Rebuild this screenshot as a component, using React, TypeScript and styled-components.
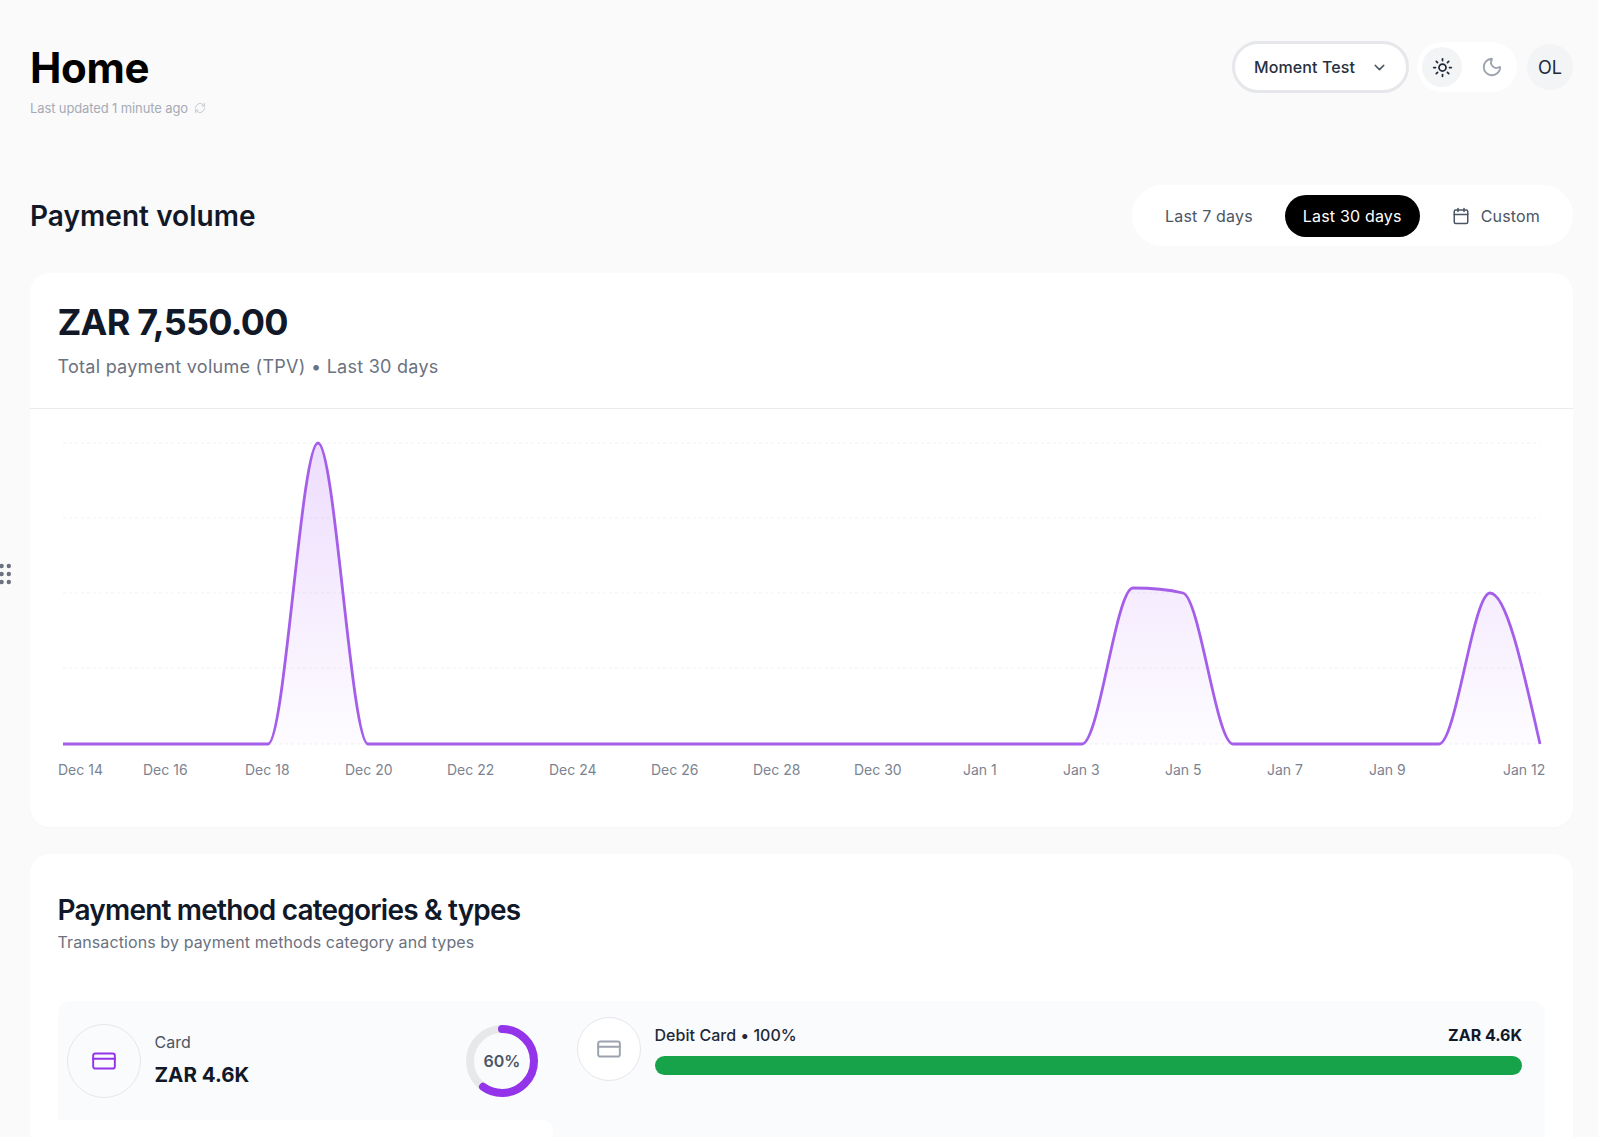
import React from "react";
import styled, { createGlobalStyle } from "styled-components";
import { Calendar, ChevronDown, CreditCard, Moon, RefreshCw, Sun } from "lucide-react";

const Global = createGlobalStyle`
  html, body { margin: 0; padding: 0; height: 100%; overflow: hidden; background: #fafafb; }
  * { box-sizing: border-box; }
  body { font-family: Inter, "Liberation Sans", sans-serif; color: #111827; }
`;

const Page = styled.div`
  height: 1137px;
  overflow: hidden;
  padding: 40px 25px 0 30px;
`;
const TopBar = styled.header`
  display: flex;
  justify-content: space-between;
  align-items: flex-start;
  height: 145px;
`;
const TitleBlock = styled.div`
  padding-top: 3px;
`;
const Title = styled.h1`
  margin: 0;
  font-size: 42px;
  line-height: 50px;
  font-weight: 700;
  letter-spacing: -0.3px;
  color: #000;
`;
const Updated = styled.div`
  display: flex;
  align-items: center;
  gap: 6px;
  margin-top: 7px;
  font-size: 13px;
  line-height: 16px;
  letter-spacing: -0.12px;
  color: #a5abb5;
  svg { color: #c4c8cf; }
`;
const Controls = styled.div`
  display: flex;
  align-items: center;
  padding-top: 1px;
`;
const OrgSelect = styled.button`
  display: flex;
  align-items: center;
  justify-content: space-between;
  width: 177px;
  height: 52px;
  padding: 0 18px 0 19px;
  border: 3px solid #e5e7eb;
  border-radius: 26px;
  background: #fff;
  font: 500 16px Inter, sans-serif;
  letter-spacing: 0.1px;
  color: #27303f;
  svg { color: #4b5563; }
`;
const ThemeToggle = styled.div`
  display: flex;
  align-items: center;
  width: 100px;
  height: 50px;
  margin-left: 8px;
  padding-left: 5px;
  border-radius: 25px;
  background: #fff;
`;
const ThemeButton = styled.span<{ $active?: boolean }>`
  display: flex;
  flex: none;
  align-items: center;
  justify-content: center;
  width: 40px;
  height: 40px;
  margin-right: 10px;
  border-radius: 50%;
  background: ${(p) => (p.$active ? "#f3f4f6" : "transparent")};
  color: ${(p) => (p.$active ? "#1f2937" : "#9ca3af")};
`;
const Avatar = styled.div`
  display: flex;
  align-items: center;
  justify-content: center;
  width: 46px;
  height: 46px;
  margin-left: 10px;
  border-radius: 50%;
  background: #f3f4f6;
  font-size: 18px;
  color: #1f2937;
`;
const SectionRow = styled.div`
  display: flex;
  justify-content: space-between;
  align-items: center;
  height: 61px;
  margin-bottom: 27px;
`;
const SectionTitle = styled.h2`
  margin: 0;
  font-size: 28px;
  line-height: 34px;
  font-weight: 600;
  letter-spacing: 0.05px;
  color: #111827;
`;
const RangeTabs = styled.div`
  display: flex;
  align-items: center;
  gap: 14px;
  height: 61px;
  padding: 0 15px;
  border-radius: 31px;
  background: #fff;
`;
const RangeTab = styled.span<{ $active?: boolean }>`
  display: flex;
  align-items: center;
  gap: 11px;
  height: 42px;
  padding: 0 18px;
  border-radius: 21px;
  font-size: 16px;
  font-weight: 400;
  letter-spacing: 0.18px;
  background: ${(p) => (p.$active ? "#000" : "transparent")};
  color: ${(p) => (p.$active ? "#fff" : "#4b5563")};
`;
const Card = styled.section`
  border-radius: 20px;
  background: #fff;
  box-shadow: 0 1px 2px rgba(17, 24, 39, 0.02);
`;
const VolumeCard = styled(Card)`
  height: 554px;
  margin-bottom: 27px;
`;
const VolumeHead = styled.div`
  height: 136px;
  padding: 27px 28px 0 27.5px;
  border-bottom: 1px solid #e9ebee;
`;
const Amount = styled.div`
  font-size: 36px;
  line-height: 44px;
  font-weight: 700;
  letter-spacing: -0.82px;
  color: #111827;
`;
const AmountNote = styled.div`
  margin-top: 11px;
  font-size: 18px;
  line-height: 24px;
  letter-spacing: 0.27px;
  color: #6b7280;
`;
const ChartSvg = styled.svg`
  display: block;
  width: 1543px;
  height: 417px;
`;
const MethodsCard = styled(Card)`
  padding: 39px 28px 0 27.5px;
`;
const MethodsTitle = styled.h3`
  margin: 0;
  font-size: 28px;
  line-height: 34px;
  font-weight: 600;
  letter-spacing: -0.8px;
  color: #111827;
`;
const MethodsNote = styled.p`
  margin: 4px 0 0;
  font-size: 16px;
  line-height: 22px;
  letter-spacing: 0.1px;
  color: #6b7280;
`;
const Panel = styled.div`
  display: grid;
  grid-template-columns: 495px 1fr;
  height: 200px;
  margin-top: 48px;
  border-radius: 12px;
  background: #f9fbfd;
`;
const CategoryColumn = styled.div`
  display: flex;
  flex-direction: column;
`;
const CategorySummary = styled.div`
  display: flex;
  align-items: center;
  height: 119px;
  padding: 0 14.5px 0 9px;
`;
const CategoryFiller = styled.div`
  flex: 1;
  border-top-right-radius: 10px;
  background: #fff;
`;
const IconCircle = styled.span<{ $size: number; $color: string; $fill: string }>`
  display: flex;
  flex: none;
  align-items: center;
  justify-content: center;
  width: ${(p) => p.$size}px;
  height: ${(p) => p.$size}px;
  border: 1px solid #e5e7eb;
  border-radius: 50%;
  background: ${(p) => p.$fill};
  color: ${(p) => p.$color};
`;
const CategoryText = styled.div`
  flex: 1;
  margin: 0 0 2px 14px;
`;
const CategoryLabel = styled.div`
  font-size: 16px;
  line-height: 22px;
  color: #4b5563;
`;
const CategoryValue = styled.div`
  margin-top: 9px;
  font-size: 20.5px;
  line-height: 26px;
  font-weight: 700;
  color: #111827;
`;
const Donut = styled.div`
  position: relative;
  width: 72px;
  height: 72px;
`;
const DonutLabel = styled.span`
  position: absolute;
  inset: 0;
  display: flex;
  align-items: center;
  justify-content: center;
  font-size: 16px;
  font-weight: 600;
  color: #4b5563;
`;
const TypeRow = styled.div`
  display: flex;
  align-items: flex-start;
  gap: 14px;
  padding: 16px 23px 0 24px;
`;
const TypeBody = styled.div`
  flex: 1;
  padding-top: 7px;
`;
const TypeHead = styled.div`
  display: flex;
  justify-content: space-between;
  font-size: 16px;
  font-weight: 500;
  line-height: 22px;
  letter-spacing: 0.05px;
  color: #1f2937;
`;
const TypeValue = styled.span`
  font-weight: 700;
  letter-spacing: 0;
  color: #111827;
`;
const Bar = styled.div`
  height: 19px;
  margin-top: 10px;
  border-radius: 10px;
  background: #16a34a;
`;
const Handle = styled.svg`
  position: absolute;
  left: 0;
  top: 563px;
`;

const grid = [443, 518, 593, 668, 744];
const ticks: [string, number][] = [
  ["Dec 14", 58], ["Dec 16", 143], ["Dec 18", 245], ["Dec 20", 345], ["Dec 22", 447],
  ["Dec 24", 549], ["Dec 26", 651], ["Dec 28", 753], ["Dec 30", 854], ["Jan 1", 963],
  ["Jan 3", 1063], ["Jan 5", 1165], ["Jan 7", 1267], ["Jan 9", 1369], ["Jan 12", 1503],
];
const line =
  "M63 744 L268 744 C284.7 744 301.3 443 318 443 C334.7 443 351.3 744 368 744 " +
  "L1082 744 C1099 744 1116 588 1133 588 C1149.7 588 1166.3 589 1183 593 " +
  "C1199.7 597 1216.3 744 1233 744 L1439 744 C1456 744 1473 593 1490 593 " +
  "C1506.7 593 1523.3 670 1540 744";

export default function App() {
  const circumference = 2 * Math.PI * 32;
  return (
    <Page>
      <Global />
      <Handle width="12" height="24" viewBox="0 0 12 24" fill="#6b7280">
        {[3, 11, 19].map((y) => (
          <g key={y}>
            <circle cx="1.6" cy={y} r="2.2" />
            <circle cx="8.8" cy={y} r="2.2" />
          </g>
        ))}
      </Handle>
      <TopBar>
        <TitleBlock>
          <Title>Home</Title>
          <Updated>
            Last updated 1 minute ago <RefreshCw size={12} />
          </Updated>
        </TitleBlock>
        <Controls>
          <OrgSelect>
            Moment Test <ChevronDown size={17} />
          </OrgSelect>
          <ThemeToggle>
            <ThemeButton $active><Sun size={21} /></ThemeButton>
            <ThemeButton><Moon size={22} /></ThemeButton>
          </ThemeToggle>
          <Avatar>OL</Avatar>
        </Controls>
      </TopBar>
      <SectionRow>
        <SectionTitle>Payment volume</SectionTitle>
        <RangeTabs>
          <RangeTab>Last 7 days</RangeTab>
          <RangeTab $active>Last 30 days</RangeTab>
          <RangeTab><Calendar size={18} />Custom</RangeTab>
        </RangeTabs>
      </SectionRow>
      <VolumeCard>
        <VolumeHead>
          <Amount>ZAR 7,550.00</Amount>
          <AmountNote>Total payment volume (TPV) • Last 30 days</AmountNote>
        </VolumeHead>
        <ChartSvg viewBox="30 409 1543 417">
          <defs>
            <linearGradient id="area" x1="0" y1="0" x2="0" y2="1">
              <stop offset="0" stopColor="#a855f7" stopOpacity="0.2" />
              <stop offset="1" stopColor="#a855f7" stopOpacity="0.02" />
            </linearGradient>
          </defs>
          {grid.map((y) => (
            <line key={y} x1="63" x2="1540" y1={y} y2={y} stroke="#f0f1f3" strokeDasharray="3 3" />
          ))}
          <path d={`${line} Z`} fill="url(#area)" />
          <path d={line} fill="none" stroke="#a55eea" strokeWidth="2.8" />
          {ticks.map(([label, x]) => (
            <text key={label} x={x} y="775" fontSize="14" fill="#7b8391" fontFamily="Inter, sans-serif">
              {label}
            </text>
          ))}
        </ChartSvg>
      </VolumeCard>
      <MethodsCard>
        <MethodsTitle>Payment method categories &amp; types</MethodsTitle>
        <MethodsNote>Transactions by payment methods category and types</MethodsNote>
        <Panel>
          <CategoryColumn>
            <CategorySummary>
              <IconCircle $size={74} $color="#9333ea" $fill="transparent">
                <CreditCard size={26} strokeWidth={1.8} />
              </IconCircle>
              <CategoryText>
                <CategoryLabel>Card</CategoryLabel>
                <CategoryValue>ZAR 4.6K</CategoryValue>
              </CategoryText>
              <Donut>
                <svg width="72" height="72" viewBox="0 0 72 72">
                  <circle cx="36" cy="36" r="32" fill="none" stroke="#e7e8ea" strokeWidth="8" />
                  <circle
                    cx="36" cy="36" r="32" fill="none" stroke="#9333ea" strokeWidth="8" strokeLinecap="round"
                    strokeDasharray={`${circumference * 0.6} ${circumference}`}
                    transform="rotate(-90 36 36)"
                  />
                </svg>
                <DonutLabel>60%</DonutLabel>
              </Donut>
            </CategorySummary>
            <CategoryFiller />
          </CategoryColumn>
          <TypeRow>
            <IconCircle $size={64} $color="#9ca3af" $fill="#fff">
              <CreditCard size={26} strokeWidth={1.8} />
            </IconCircle>
            <TypeBody>
              <TypeHead>
                <span>Debit Card • 100%</span>
                <TypeValue>ZAR 4.6K</TypeValue>
              </TypeHead>
              <Bar />
            </TypeBody>
          </TypeRow>
        </Panel>
      </MethodsCard>
    </Page>
  );
}
